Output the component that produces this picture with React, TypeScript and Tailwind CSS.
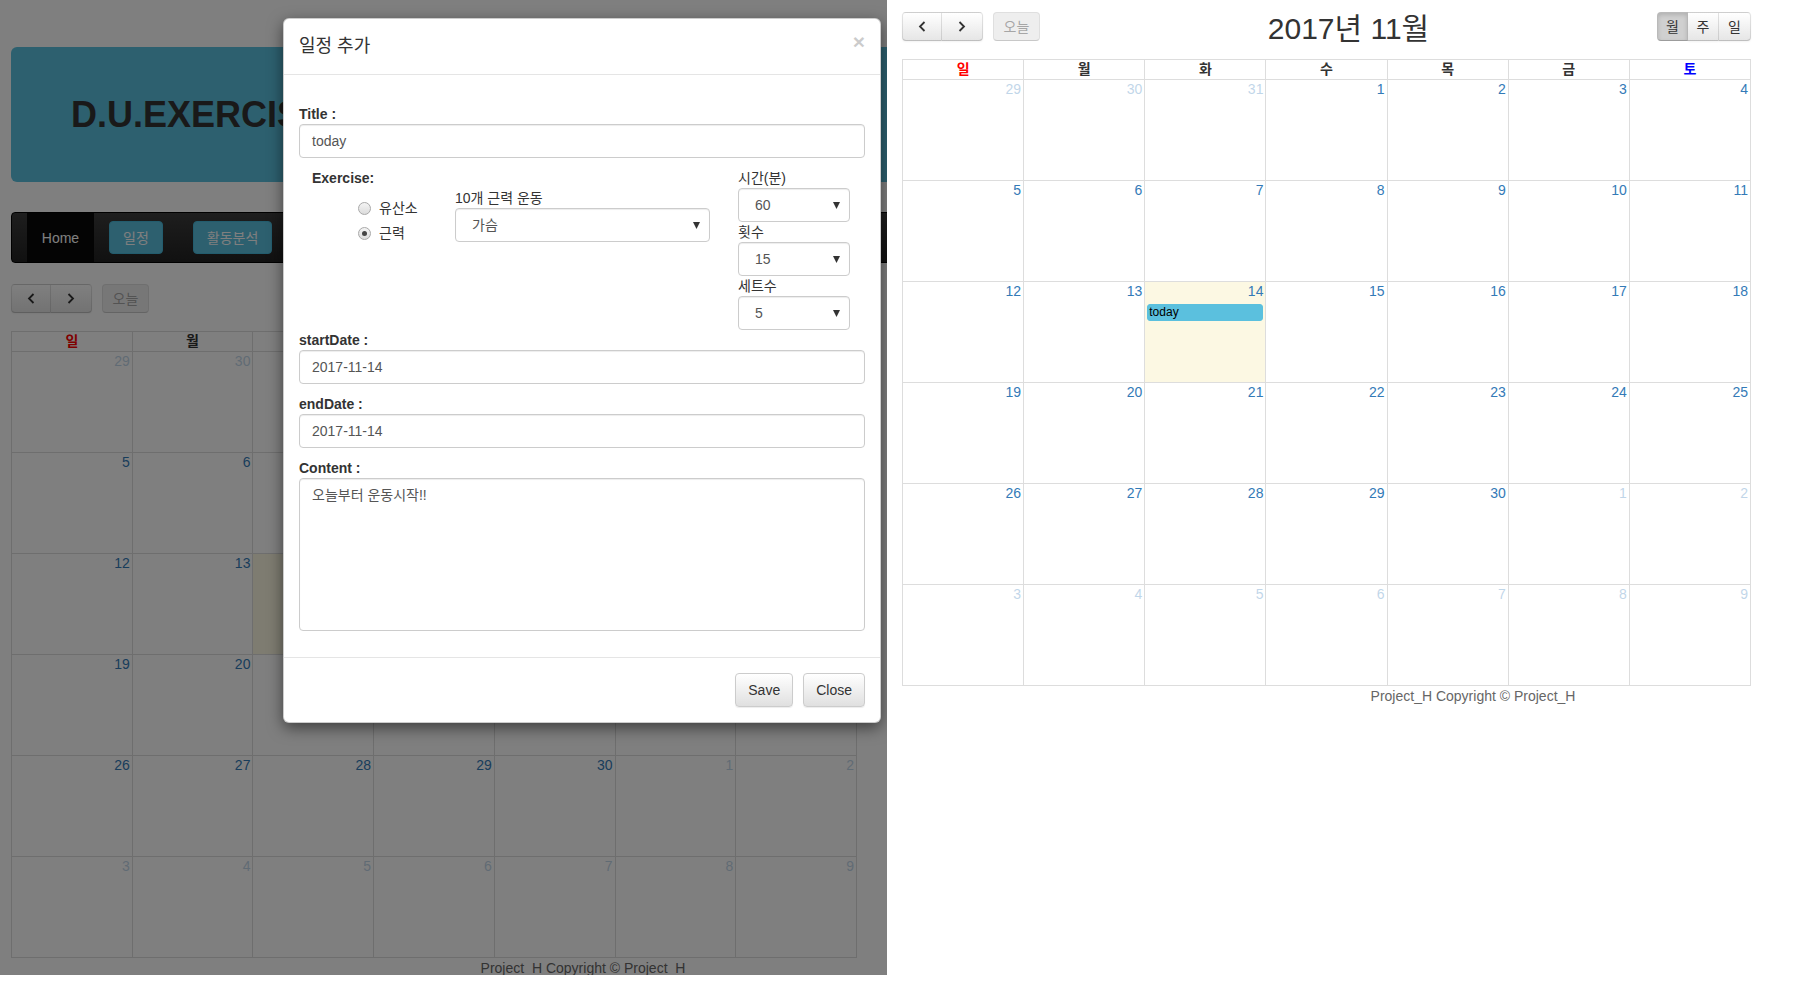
import React from 'react';

type Day = { n: number; other: boolean };

const days: Day[] = Array.from({ length: 42 }, (_, i) => {
  const n = i - 2;
  if (n < 1) return { n: 31 + n, other: true };
  if (n > 30) return { n: n - 30, other: true };
  return { n, other: false };
});

const weekdays = [
  { t: '일', c: 'text-[#f00]' },
  { t: '월', c: 'text-[#333]' },
  { t: '화', c: 'text-[#333]' },
  { t: '수', c: 'text-[#333]' },
  { t: '목', c: 'text-[#333]' },
  { t: '금', c: 'text-[#333]' },
  { t: '토', c: 'text-[#00f]' },
];

const fcBtn =
  'h-[29px] border border-[rgba(0,0,0,0.1)] border-b-[rgba(0,0,0,0.25)] bg-linear-to-b from-white to-[#e6e6e6] shadow-[inset_0_1px_0_rgba(255,255,255,0.2),0_1px_2px_rgba(0,0,0,0.05)] text-[#333] flex items-center justify-center';

const Chevron = ({ dir }: { dir: 'l' | 'r' }) => (
  <svg width="8" height="11" viewBox="0 0 8 11" fill="none" stroke="#333" strokeWidth="1.8">
    <path d={dir === 'l' ? 'M6.5 1 L2 5.5 L6.5 10' : 'M1.5 1 L6 5.5 L1.5 10'} />
  </svg>
);

function Toolbar() {
  return (
    <div className="flex items-center h-[29px]">
      <div className="flex">
        <button className={`${fcBtn} w-[40px] rounded-l-[4px]`}>
          <Chevron dir="l" />
        </button>
        <button className={`${fcBtn} w-[41px] rounded-r-[4px] border-l-0`}>
          <Chevron dir="r" />
        </button>
      </div>
      <button className={`${fcBtn} ml-[10px] w-[47px] rounded-[4px] opacity-[0.65] bg-none bg-[#e6e6e6] shadow-none`}>
        <span className="text-[#777]">오늘</span>
      </button>
      <h2 className="flex-1 pt-[4px] text-center text-[30px] leading-[34px] text-[#333]">2017년 11월</h2>
      <div className="flex">
        <button className={`${fcBtn} w-[31px] rounded-l-[4px] bg-none bg-[#d0d0d0] shadow-[inset_0_2px_4px_rgba(0,0,0,0.15)]`}>월</button>
        <button className={`${fcBtn} w-[31px] border-l-0`}>주</button>
        <button className={`${fcBtn} w-[32px] border-l-0 rounded-r-[4px]`}>일</button>
      </div>
    </div>
  );
}

function MonthGrid({ width, withEvent }: { width: string; withEvent?: boolean }) {
  return (
    <div className={`${width} border-t border-l border-[#ddd]`}>
      <div className="grid grid-cols-7">
        {weekdays.map((w) => (
          <div key={w.t} className={`h-[20px] border-r border-b border-[#ddd] text-center font-bold leading-[19px] ${w.c}`}>
            {w.t}
          </div>
        ))}
      </div>
      <div className="grid grid-cols-7">
        {days.map((d, i) => {
          const today = d.n === 14 && !d.other;
          return (
            <div
              key={i}
              className={`h-[101px] border-r border-b border-[#ddd] ${today ? 'bg-[#fcf8e3]' : ''}`}
            >
              <div className={`h-[21px] pr-[2px] text-right leading-[19px] text-[#337ab7] ${d.other ? 'opacity-30' : ''}`}>
                {d.n}
              </div>
              {today && withEvent && (
                <div className="mx-[2px] mt-[1px] h-[17px] rounded-[3px] border border-[#5bc0de] bg-[#5bc0de] pl-[1px] text-[12px] leading-[15px] text-black">
                  today
                </div>
              )}
            </div>
          );
        })}
      </div>
    </div>
  );
}

const Select = ({ value, width }: { value: string; width: string }) => (
  <div
    className={`${width} h-[34px] rounded-[4px] border border-[#ccc] bg-white shadow-[inset_0_1px_1px_rgba(0,0,0,0.075)] flex items-center justify-between pl-[16px] pr-[9px] text-[#555]`}
  >
    <span>{value}</span>
    <svg width="7" height="7" viewBox="0 0 7 7">
      <path d="M0 0 H7 L3.5 7 Z" fill="#333" />
    </svg>
  </div>
);

const Input = ({ value }: { value: string }) => (
  <div className="h-[34px] rounded-[4px] border border-[#ccc] bg-white shadow-[inset_0_1px_1px_rgba(0,0,0,0.075)] flex items-center pl-[12px] text-[#555]">
    {value}
  </div>
);

const Radio = ({ checked, label }: { checked?: boolean; label: string }) => (
  <div className="flex items-center h-[20px] gap-[8px]">
    <span className="w-[13px] h-[13px] rounded-full border border-[#a9a9a9] bg-linear-to-b from-[#f4f4f4] to-[#dcdcdc] flex items-center justify-center">
      {checked && <span className="w-[5px] h-[5px] rounded-full bg-[#444]" />}
    </span>
    <span className="text-[#333]">{label}</span>
  </div>
);

const modalBtn =
  'h-[34px] px-[12px] rounded-[4px] border border-[#ccc] bg-linear-to-b from-white to-[#e0e0e0] shadow-[inset_0_1px_0_rgba(255,255,255,0.15),0_1px_1px_rgba(0,0,0,0.075)] text-[#333]';

function Modal() {
  return (
    <div className="absolute left-[283px] top-[18px] w-[598px] rounded-[6px] border border-[rgba(0,0,0,0.2)] bg-white shadow-[0_5px_15px_rgba(0,0,0,0.5)] text-[#333]">
      <div className="flex items-start justify-between border-b border-[#e5e5e5] px-[15px] py-[15px]">
        <h4 className="text-[18px] leading-[25px]">일정 추가</h4>
        <span className="-mt-[3px] text-[21px] font-bold leading-[21px] text-black opacity-20">×</span>
      </div>
      <div className="px-[15px] pt-[29px] pb-[26px]">
        <label className="block font-bold">Title :</label>
        <Input value="today" />
        <div className="mt-[10px] flex">
          <div className="ml-[13px] w-[143px]">
            <div className="font-bold">Exercise:</div>
            <div className="mt-[10px] pl-[46px] flex flex-col gap-[5px]">
              <Radio label="유산소" />
              <Radio label="근력" checked />
            </div>
          </div>
          <div className="w-[255px] pt-[20px]">
            <div>10개 근력 운동</div>
            <Select value="가슴" width="w-[255px]" />
          </div>
          <div className="ml-[28px] w-[112px]">
            <div>시간(분)</div>
            <Select value="60" width="w-[112px]" />
            <div>횟수</div>
            <Select value="15" width="w-[112px]" />
            <div>세트수</div>
            <Select value="5" width="w-[112px]" />
          </div>
        </div>
        <label className="block font-bold">startDate :</label>
        <Input value="2017-11-14" />
        <label className="mt-[10px] block font-bold">endDate :</label>
        <Input value="2017-11-14" />
        <label className="mt-[10px] block font-bold">Content :</label>
        <div className="h-[153px] rounded-[4px] border border-[#ccc] bg-white shadow-[inset_0_1px_1px_rgba(0,0,0,0.075)] px-[12px] py-[6px] text-[#555]">
          오늘부터 운동시작!!
        </div>
      </div>
      <div className="flex justify-end gap-[10px] border-t border-[#e5e5e5] p-[15px]">
        <button className={modalBtn}>Save</button>
        <button className={modalBtn}>Close</button>
      </div>
    </div>
  );
}

export default function App() {
  return (
    <div className="flex w-[1799px] h-[992px] overflow-hidden bg-white text-[14px] leading-[20px] font-['Liberation_Sans','Noto_Sans_CJK_KR',sans-serif]">
      <div className="relative w-[887px] h-[975px] shrink-0 overflow-hidden bg-white">
        <div className="pl-[11px] pt-[47px]">
          <div className="w-[1160px] h-[135px] rounded-[6px] bg-[#5bc0de] flex items-center pl-[60px]">
            <h1 className="text-[36px] font-bold text-[#333]">D.U.EXERCISE</h1>
          </div>
          <div className="mt-[30px] w-[1160px] h-[51px] rounded-[4px] border border-black bg-linear-to-b from-[#3c3c3c] to-[#222] flex items-center pl-[15px]">
            <div className="h-full w-[67px] bg-[#080808] flex items-center justify-center text-white">Home</div>
            <div className="ml-[15px] h-[33px] px-[13px] rounded-[4px] border border-[#46b8da] bg-[#5bc0de] flex items-center text-white">일정</div>
            <div className="ml-[30px] h-[33px] px-[13px] rounded-[4px] border border-[#46b8da] bg-[#5bc0de] flex items-center text-white">활동분석</div>
          </div>
          <div className="mt-[21px] w-[846px]">
            <Toolbar />
          </div>
          <div className="mt-[18px]">
            <MonthGrid width="w-[846px]" />
          </div>
          <div className="w-[1144px] text-center text-[#666]">Project_H Copyright © Project_H</div>
        </div>
        <div className="absolute inset-0 bg-black/50" />
        <Modal />
      </div>
      <div className="w-[912px] shrink-0 overflow-hidden pl-[15px] pt-[12px]">
        <div className="w-[849px]">
          <Toolbar />
        </div>
        <div className="mt-[18px]">
          <MonthGrid width="w-[849px]" withEvent />
        </div>
        <div className="w-[1142px] text-center text-[#666]">Project_H Copyright © Project_H</div>
      </div>
    </div>
  );
}
